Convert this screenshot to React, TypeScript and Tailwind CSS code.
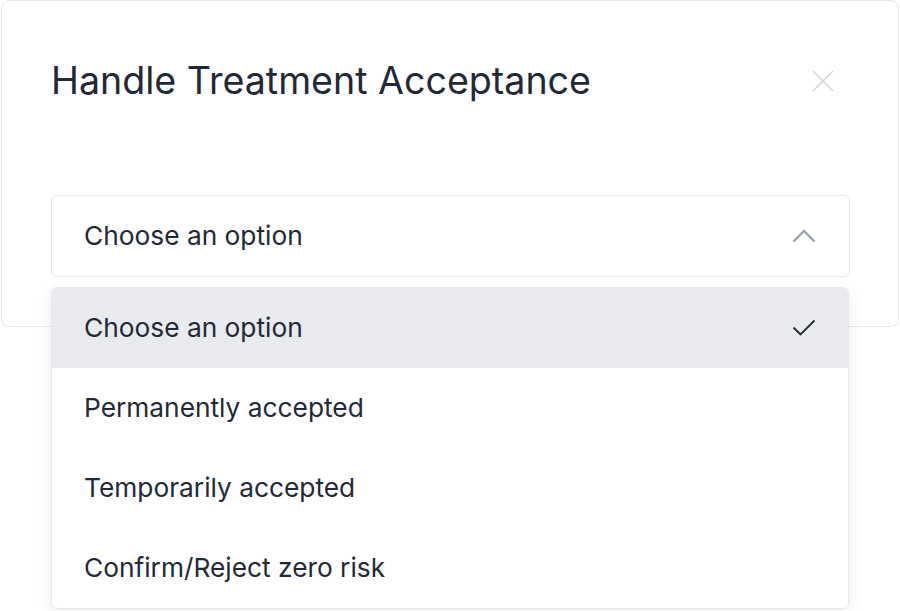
import React from "react";

const font = { fontFamily: "Inter, 'Noto Sans', sans-serif" };

export default function App() {
  const options = [
    "Choose an option",
    "Permanently accepted",
    "Temporarily accepted",
    "Confirm/Reject zero risk",
  ];
  return (
    <div className="relative w-[900px] h-[611px] bg-white overflow-hidden text-[#1f2937]" style={font}>
      <div className="ml-px w-[898px] h-[327px] border border-[#e5e7eb] rounded-lg bg-white pl-[49px] pr-[48px]">
        <div className="flex items-center justify-between h-[160px]">
          <h1 className="text-[37.6px] leading-[44px] font-normal">
            Handle Treatment Acceptance
          </h1>
          <svg width="22" height="22" viewBox="0 0 22 22" className="mr-[16px]">
            <path d="M1 1 L21 21 M21 1 L1 21" stroke="#d1d5db" strokeWidth="1.6" fill="none" />
          </svg>
        </div>
        <div className="mt-[34px] h-[82px] border border-[#e5e7eb] rounded-md flex items-center justify-between pl-[32px] pr-[33px]">
          <span className="text-[26.3px] leading-[32px]">Choose an option</span>
          <svg width="24" height="14" viewBox="0 0 24 14">
            <path d="M1.5 12.5 L12 2 L22.5 12.5" stroke="#9ca3af" strokeWidth="2.4" fill="none" />
          </svg>
        </div>
      </div>
      <div className="absolute left-[51px] top-[287px] w-[798px] h-[322px] border border-[#e5e7eb] rounded-md bg-white overflow-hidden shadow-[0_4px_16px_rgba(0,0,0,0.08)]">
        {options.map((o, i) => (
          <div
            key={o}
            className={
              i === 0
                ? "h-[80px] flex items-center justify-between pl-[32px] pr-[32px] bg-[#e9eaee]"
                : "h-[80px] flex items-center justify-between pl-[32px] pr-[32px]"
            }
          >
            <span className="text-[26.3px] leading-[32px]">{o}</span>
            {i === 0 && (
              <svg width="24" height="18" viewBox="0 0 24 18">
                <path d="M1.5 8.5 L8.5 15.5 L22.5 1.5" stroke="#1f2937" strokeWidth="1.8" fill="none" />
              </svg>
            )}
          </div>
        ))}
      </div>
    </div>
  );
}
